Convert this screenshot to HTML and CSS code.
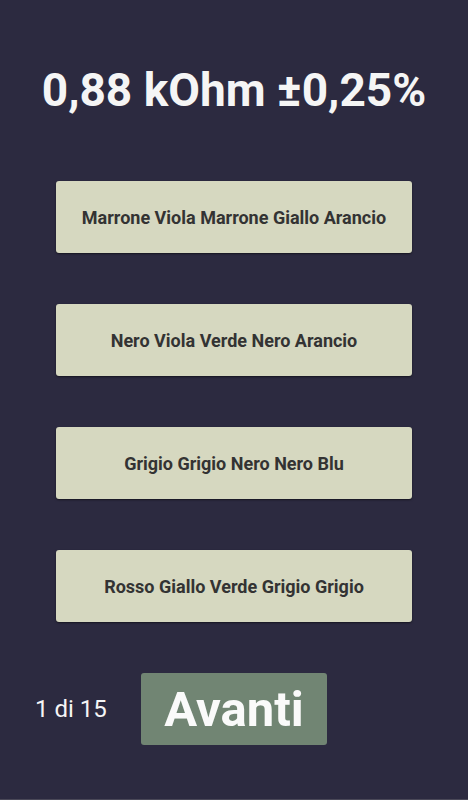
FILE: index.html
```html
<!DOCTYPE html>
<html lang="it">
<head>
    <meta charset="UTF-8">
    <title>Codice colori resistenze</title>
    <link rel="stylesheet" href="styles.css">
</head>
<body>

<main class="quiz">
    <h1 class="valore">0,88 kOhm ±0,25%</h1>

    <div class="risposte">
        <button class="risposta">Marrone Viola Marrone Giallo Arancio</button>
        <button class="risposta">Nero Viola Verde Nero Arancio</button>
        <button class="risposta">Grigio Grigio Nero Nero Blu</button>
        <button class="risposta">Rosso Giallo Verde Grigio Grigio</button>
    </div>

    <div class="piede">
        <span class="contatore">1 di 15</span>
        <button class="avanti">Avanti</button>
    </div>
</main>

</body>
</html>
```

FILE: styles.css
```css
html, body {
    margin: 0;
    height: 100%;
}
body {
    background-color: #2c2a40;
    font-family: Roboto, "Liberation Sans", sans-serif;
    border-bottom: 1px solid #4a4858;
    box-sizing: border-box;
}
.quiz {
    display: flex;
    flex-direction: column;
}
.valore {
    margin: 63px 0 0;
    text-align: center;
    color: #f5f5f5;
    font-size: 46px;
    font-weight: bold;
    line-height: 54px;
}
.risposte {
    display: flex;
    flex-direction: column;
    gap: 51px;
    padding: 64px 56px 0;
}
.risposta {
    height: 72px;
    border: none;
    border-radius: 3px;
    background-color: #d6d8c0;
    color: #333333;
    font-family: inherit;
    font-size: 18px;
    font-weight: bold;
    box-shadow: 0 1px 2px rgba(0, 0, 0, 0.5);
}
.piede {
    display: flex;
    align-items: center;
    padding: 51px 0 0 35px;
}
.contatore {
    color: #f5f5f5;
    font-size: 24px;
    width: 106px;
}
.avanti {
    width: 186px;
    height: 72px;
    border: none;
    border-radius: 3px;
    background-color: #718573;
    color: #fafafa;
    font-family: inherit;
    font-size: 49px;
    font-weight: bold;
    padding: 0;
}
```
